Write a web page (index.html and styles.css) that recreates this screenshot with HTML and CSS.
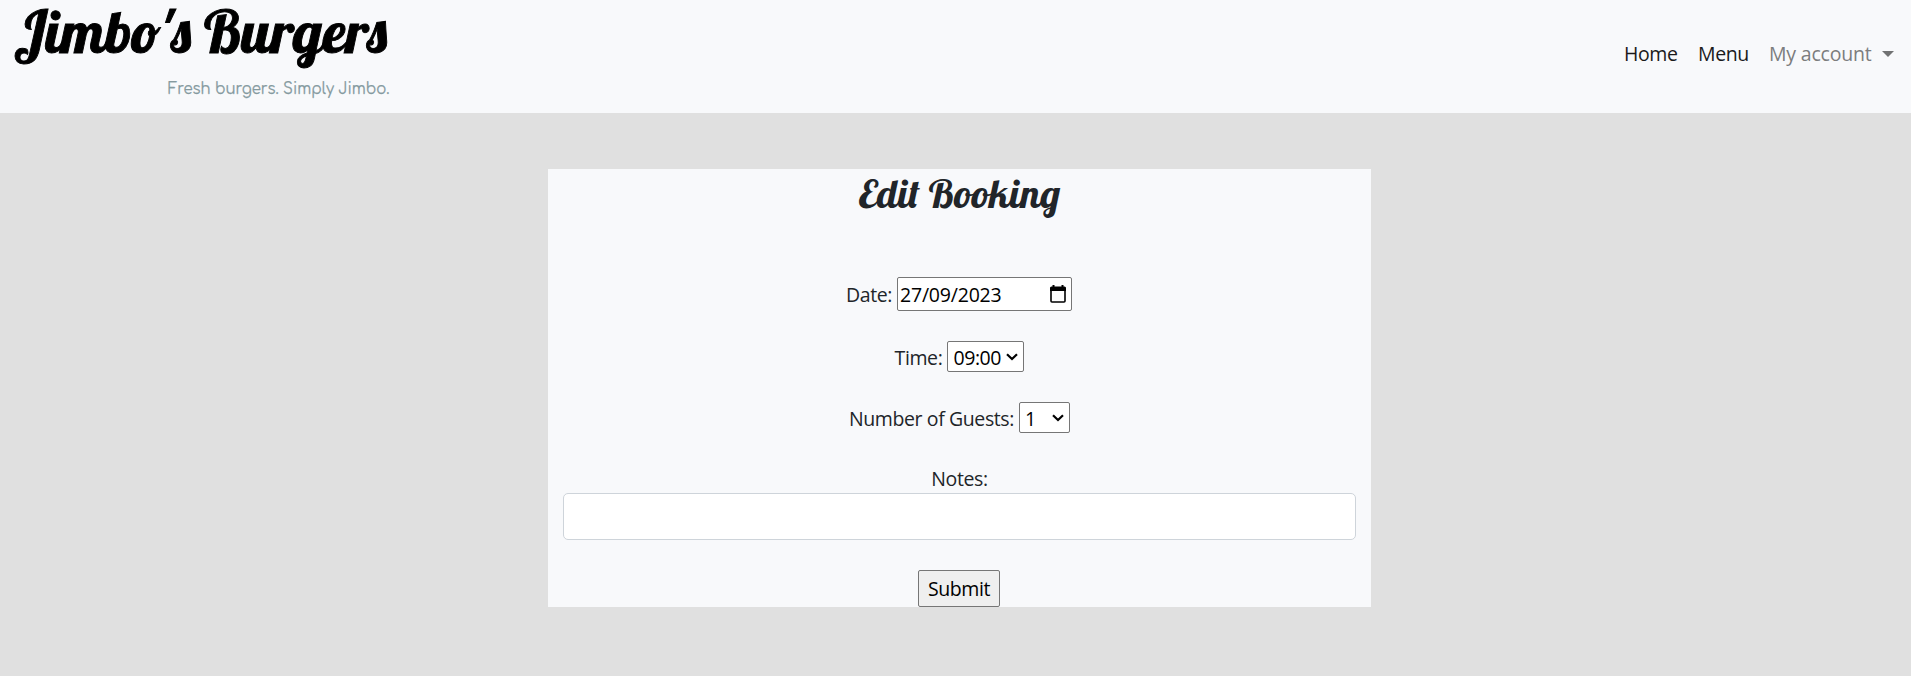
FILE: index.html
```html
<!DOCTYPE html>
<html lang="en">
<head>
<meta charset="utf-8">
<title>Jimbo's Burgers</title>
<link rel="stylesheet" href="styles.css">
</head>
<body>
<header class="navbar">
  <a class="brand" href="#">
    <svg width="400" height="113" viewBox="0 0 400 113">
      <text class="script" x="14" y="53" font-size="58" textLength="373" lengthAdjust="spacingAndGlyphs">Jimbo's Burgers</text>
      <text class="tagline" x="168" y="93.500" textLength="221.500" lengthAdjust="spacingAndGlyphs">Fresh burgers. Simply Jimbo.</text>
    </svg>
  </a>
  <nav class="links">
    <a class="link home" href="#">Home</a>
    <a class="link menu" href="#">Menu</a>
    <a class="link account" href="#">My account</a>
    <span class="caret"></span>
  </nav>
</header>
<main class="card">
  <h1 class="title">Edit Booking</h1>
  <form class="form">
    <div class="row row-date">
      <label class="label">Date:</label>
      <div class="box date">
        <span>27/09/2023</span>
        <svg width="16" height="18" viewBox="0 0 16 18"><path d="M3.500 0v3M12.500 0v3" stroke="#000" stroke-width="2"/><path d="M1 3.500V16a1 1 0 0 0 1 1h12a1 1 0 0 0 1-1V3.500Z" fill="none" stroke="#000" stroke-width="1.600"/><path d="M0 3a1.500 1.500 0 0 1 1.500-1.500h13A1.500 1.500 0 0 1 16 3v3H0Z"/></svg>
      </div>
    </div>
    <div class="row row-time">
      <label class="label">Time:</label>
      <div class="box time">
        <span>09:00</span>
        <svg width="12" height="8" viewBox="0 0 12 8"><path d="M1 1.200 6 6l5-4.800" fill="none" stroke="#000" stroke-width="2.200"/></svg>
      </div>
    </div>
    <div class="row row-guests">
      <label class="label">Number of Guests:</label>
      <div class="box guests">
        <span>1</span>
        <svg width="12" height="8" viewBox="0 0 12 8"><path d="M1 1.200 6 6l5-4.800" fill="none" stroke="#000" stroke-width="2.200"/></svg>
      </div>
    </div>
    <label class="label notes-label" for="notes">Notes:</label>
    <input class="notes" id="notes" type="text">
    <button class="submit" type="button">Submit</button>
  </form>
</main>
</body>
</html>
```
FILE: styles.css
```css
* { box-sizing: border-box; }
body {
  margin: 0;
  min-height: 676px;
  background: #e0e0e0;
  color: #212529;
  font: 19.5px/30px "Segoe UI", "Open Sans", "Noto Sans", sans-serif;
  letter-spacing: -0.4px;
}
svg { display: block; flex: none; overflow: visible; }
.navbar {
  height: 113px;
  display: flex;
  justify-content: space-between;
  background: #f8f9fb;
}
.script {
  font-family: Lobster, "Liberation Serif", serif;
  letter-spacing: 0;
  fill: #000;
  stroke: #000;
  stroke-width: 0.9px;
}
.tagline {
  font-family: Comfortaa, Quicksand, Lato, sans-serif;
  font-size: 16px;
  letter-spacing: 0;
  fill: #859a9f;
  stroke: #859a9f;
  stroke-width: 0.25px;
}
.links {
  display: flex;
  align-items: center;
  padding: 0 17px 5px 0;
}
.link { color: #1a1a1b; text-decoration: none; white-space: nowrap; }
.home { width: 74px; }
.menu { width: 71px; }
.account { width: 113px; color: #7c7d7e; letter-spacing: -0.2px; }
.caret {
  border: 6px solid transparent;
  border-top-color: #717273;
  border-bottom: 0;
  margin-bottom: 1px;
}
.card {
  width: 823px;
  height: 438px;
  margin: 56px 0 0 548px;
  padding: 0 15px;
  background: #f8f9fb;
}
.title {
  margin: 0;
  height: 60px;
  text-align: center;
  font: 500 40px/48px Lobster, "Liberation Serif", serif;
  letter-spacing: 0;
}
.form { display: flex; flex-direction: column; align-items: center; }
.row { display: flex; align-items: center; gap: 5px; }
.label { white-space: nowrap; }
.row .label, .box span { padding-top: 2px; }
.row-date { height: 34px; margin-top: 48px; padding-right: 1px; }
.row-time { height: 31px; margin-top: 30px; }
.row-guests { height: 31px; margin-top: 30px; }
.box {
  height: 100%;
  display: flex;
  align-items: center;
  justify-content: space-between;
  background: #fff;
  color: #000;
  border: 1px solid #767676;
  border-radius: 2px;
}
.date { width: 175px; padding: 0 5px 0 2px; letter-spacing: -0.2px; }
.time { width: 77px; padding: 0 5px; }
.guests { width: 51px; padding: 0 5px 0 5px; }
.notes-label { margin-top: 31px; height: 29px; }
.notes {
  width: 793px;
  height: 47px;
  border: 1px solid #ced4da;
  border-radius: 5px;
  background: #fff;
}
.submit {
  width: 82px;
  height: 37px;
  margin: 30px 1px 0 0;
  padding: 0;
  font: inherit;
  letter-spacing: inherit;
  color: #000;
  background: #efefef;
  border: 1px solid #767676;
  border-radius: 2px;
}
```
